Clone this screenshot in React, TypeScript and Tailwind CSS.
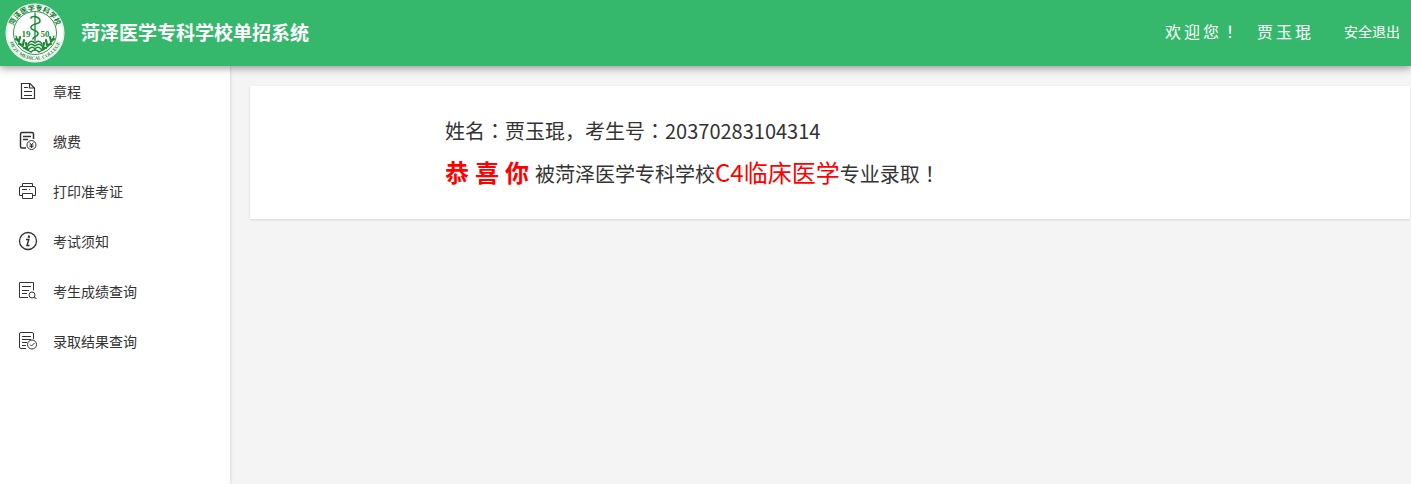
import type { ReactNode } from "react";

interface MenuItem {
  label: string;
  icon: ReactNode;
}

const iconProps = {
  width: 20,
  height: 20,
  viewBox: "0 0 20 20",
  fill: "none",
  stroke: "currentColor",
  "aria-hidden": true,
};

const menu: MenuItem[] = [
  {
    label: "章程",
    icon: (
      <svg {...iconProps} strokeWidth="1.2">
        <path d="M3.5 2.5H12L16.5 7V17.5H3.5ZM11.5 2.5V7H16.5" />
        <path d="M6 6.5H10M6 10.5H14M6 14.5H14" />
      </svg>
    ),
  },
  {
    label: "缴费",
    icon: (
      <svg {...iconProps} strokeWidth="1.5">
        <path d="M8 17H4Q2.5 17 2.5 15.5V3Q2.5 1.5 4 1.5H14Q15.5 1.5 15.5 3V8" />
        <path d="M5 5.5H13M5 8.5H10" />
        <circle cx="13.5" cy="14" r="4.5" strokeWidth="1" />
        <path d="M11.5 11.5L13.5 13.8L15.5 11.5M11.5 14H15.5M11.5 15.7H15.5M13.5 13.8V17" strokeWidth="1" />
      </svg>
    ),
  },
  {
    label: "打印准考证",
    icon: (
      <svg {...iconProps}>
        <path d="M4.5 5.5V2.5H14.5V5.5M4.5 14.5H1.5V7Q1.5 5.5 3 5.5H16Q17.5 5.5 17.5 7V14.5H14.5" />
        <path d="M4.5 12.5H14.5V17.5H4.5ZM4 8.5H9M11 8.5H12" />
      </svg>
    ),
  },
  {
    label: "考试须知",
    icon: (
      <svg {...iconProps} strokeWidth="1.3">
        <circle cx="10" cy="10" r="8.5" />
        <path d="M8 8.5H10.8L9 14.5H11.5" strokeWidth="1.5" />
        <path d="M11 4.5L10.7 6.8" strokeWidth="2" />
      </svg>
    ),
  },
  {
    label: "考生成绩查询",
    icon: (
      <svg {...iconProps}>
        <path d="M10 16.5H1.5V1.5H15.5V9.5M4 5.5H13M4 9.5H11M4 12.5H9" />
        <circle cx="14" cy="14" r="3" />
        <path d="M16 16.5L18.5 17.5" />
      </svg>
    ),
  },
  {
    label: "录取结果查询",
    icon: (
      <svg {...iconProps}>
        <path d="M8 17.5H3Q1.5 17.5 1.5 16V3Q1.5 1.5 3 1.5H14Q15.5 1.5 15.5 3V8M4 5.5H13M4 8.5H13M4 11.5H9M4 14.5H8" />
        <circle cx="14" cy="13.5" r="4.5" />
        <path d="M12 13.5L13.5 15L16.5 12" />
      </svg>
    ),
  },
];

function Logo() {
  return (
    <svg width="60" height="60" viewBox="0 0 60 60" className="shrink-0" role="img" aria-label="校徽">
      <defs>
        <path id="ringTop" d="M7.5 30A22.5 22.5 0 0 1 52.5 30" />
        <path id="ringBottom" d="M3 30A27 27 0 0 0 57 30" />
      </defs>
      <circle cx="30" cy="30" r="29.5" fill="#fff" />
      <circle cx="30" cy="30" r="28.5" fill="none" stroke="#9bd2a5" strokeWidth="0.4" />
      <circle cx="30" cy="30" r="21.5" fill="none" stroke="#178b34" strokeWidth="0.9" />
      <text fontSize="7" fill="#0c7e2b" className="font-['Noto_Sans_CJK_SC',sans-serif] font-bold">
        <textPath href="#ringTop" startOffset="50%" textAnchor="middle">
          菏泽医学专科学校
        </textPath>
      </text>
      <g fill="#178b34" className="font-['Liberation_Serif',serif] font-bold">
        <text fontSize="5">
          <textPath href="#ringBottom" startOffset="50%" textAnchor="middle">
            HEZE MEDICAL COLLEGE
          </textPath>
        </text>
        <text x="21" y="34" fontSize="9" textAnchor="middle">19</text>
        <text x="40" y="34" fontSize="9" textAnchor="middle">50</text>
      </g>
      <g fill="none" stroke="#178b34" strokeLinecap="round">
        <path d="M30 10V38" strokeWidth="1.3" />
        <path d="M26 15C27 12 35 14 35 18C35 22 25 20 26 25C27 28 34 27 33 31C32 35 28 33 28 36" strokeWidth="1.6" />
        <path d="M11 33C13 41 19 46 26 49M49 33C47 41 41 46 34 49" strokeWidth="1.2" />
        <path
          d="M11 36L14 38L15 34M14 41L18 42L19 37M19 45L22 45L21 40M49 36L46 38L45 34M46 41L42 42L41 37M41 45L38 45L39 40"
          strokeWidth="2.2"
        />
        <path
          d="M23 41Q26 36 30 40Q34 36 37 41M22 44Q26 39 30 43Q34 39 38 44M23 47Q27 42 30 46Q33 42 37 47M26 49Q30 45 34 49"
          strokeWidth="1.5"
        />
      </g>
    </svg>
  );
}

// Full-width punctuation sits in the middle of its cell
function Mark({ children }: { children: string }) {
  return <span className="font-['Noto_Sans_CJK_TC',sans-serif]">{children}</span>;
}

export default function App() {
  return (
    <div className="flex min-h-screen flex-col bg-[#f4f4f4] font-['Noto_Sans_CJK_SC',sans-serif] text-[#333]">
      <header className="relative flex h-[66px] items-center justify-between bg-[#36b86c] pl-[5px] pr-[11px] text-white shadow-[0_2px_8px_rgba(0,0,0,0.4)]">
        <div className="flex items-center gap-4">
          <Logo />
          <h1 className="pb-0.5 text-[19px] leading-7 font-bold">菏泽医学专科学校单招系统</h1>
        </div>
        <div className="flex items-center pb-1">
          <p className="flex gap-4 text-base tracking-[3px]">
            <span>
              欢迎您<Mark>！</Mark>
            </span>
            <span>贾玉琨</span>
          </p>
          <a href="#logout" className="ml-[30px] text-sm">
            安全退出
          </a>
        </div>
      </header>

      <div className="flex flex-1">
        <nav className="w-[230px] shrink-0 bg-white shadow-[0_0_3px_rgba(0,0,0,0.2)]">
          <ul>
            {menu.map((item) => (
              <li key={item.label}>
                <a href="#menu" className="flex h-[50px] items-center gap-[15px] pl-[18px] text-sm">
                  {item.icon}
                  {item.label}
                </a>
              </li>
            ))}
          </ul>
        </nav>

        <main className="flex-1 pt-5 pr-px pl-5">
          <section className="bg-white pt-6 pb-[25px] pl-[195px] text-xl shadow-[0_1px_2px_rgba(0,0,0,0.12)]">
            <p className="leading-[42px]">
              姓名<Mark>：</Mark>贾玉琨，考生号<Mark>：</Mark>20370283104314
            </p>
            <p className="flex items-baseline leading-10">
              <strong className="mr-1.5 flex gap-1.5 text-2xl leading-10 text-[#f00]">
                <span>恭</span>
                <span>喜</span>
                <span>你</span>
              </strong>
              <span>被菏泽医学专科学校</span>
              <span className="text-2xl leading-10 text-[#f00]">C4临床医学</span>
              <span>
                专业录取<Mark>！</Mark>
              </span>
            </p>
          </section>
        </main>
      </div>
    </div>
  );
}
